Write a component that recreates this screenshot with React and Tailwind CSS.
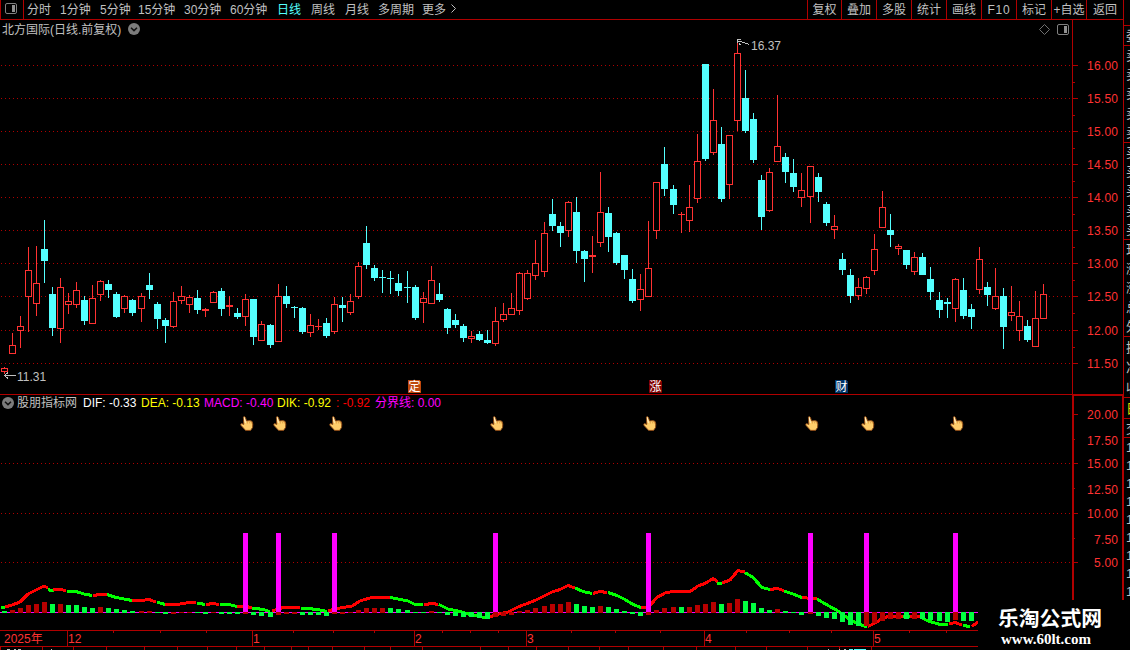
import React from "react";

const FONT = "font-['Liberation_Sans','Noto_Sans_CJK_SC',sans-serif]";

const PERIODS = [
  { label: "分时", width: "w-[33px]" },
  { label: "1分钟", width: "w-[40px]" },
  { label: "5分钟", width: "w-[38px]" },
  { label: "15分钟", width: "w-[46px]" },
  { label: "30分钟", width: "w-[46px]" },
  { label: "60分钟", width: "w-[47px]" },
  { label: "日线", width: "w-[34px]", active: true },
  { label: "周线", width: "w-[34px]" },
  { label: "月线", width: "w-[33px]" },
  { label: "多周期", width: "w-[44px]" },
  { label: "更多", width: "w-[27px]" },
];

const TOOLS = [
  { label: "复权", width: "w-[34px]" },
  { label: "叠加", width: "w-[35px]" },
  { label: "多股", width: "w-[35px]" },
  { label: "统计", width: "w-[35px]" },
  { label: "画线", width: "w-[35px]" },
  { label: "F10", width: "w-[35px]", spaced: true },
  { label: "标记", width: "w-[35px]" },
  { label: "+自选", width: "w-[35px]" },
  { label: "返回", width: "w-[37px]" },
];

// x, high, body top, body bottom, low, up
const CANDLES = [
  [4, 367, 368, 372, 374, 1], [12, 333, 345, 354, 354, 1], [20, 316, 326, 331, 348, 1],
  [28, 247, 270, 297, 332, 1], [36, 246, 283, 304, 316, 1], [44, 220, 249, 261, 283, 0],
  [52, 287, 294, 328, 336, 0], [60, 278, 287, 329, 343, 1], [68, 293, 301, 305, 314, 1],
  [76, 282, 290, 305, 308, 1], [84, 296, 300, 321, 325, 0], [92, 285, 298, 324, 324, 1],
  [100, 280, 281, 295, 301, 1], [108, 280, 284, 290, 298, 0], [116, 292, 294, 317, 318, 0],
  [124, 295, 296, 309, 313, 1], [132, 299, 300, 313, 316, 0], [141, 293, 296, 309, 322, 1],
  [149, 273, 285, 290, 299, 0], [157, 302, 304, 319, 329, 0], [165, 318, 320, 326, 343, 0],
  [173, 292, 301, 327, 328, 1], [181, 286, 296, 301, 304, 1], [189, 295, 297, 305, 313, 1],
  [197, 290, 298, 310, 314, 0], [205, 308, 309, 311, 317, 1], [213, 291, 292, 303, 303, 1],
  [221, 288, 291, 309, 316, 0], [229, 296, 305, 307, 316, 1], [237, 308, 313, 317, 319, 0],
  [245, 294, 299, 317, 326, 1], [253, 299, 299, 337, 345, 0], [261, 321, 324, 341, 341, 1],
  [270, 324, 325, 345, 348, 0], [278, 284, 296, 342, 342, 1], [286, 286, 296, 304, 308, 0],
  [294, 306, 307, 308, 318, 0], [302, 307, 308, 332, 334, 0], [310, 314, 325, 333, 337, 1],
  [318, 319, 326, 327, 330, 1], [326, 318, 323, 336, 338, 0], [334, 297, 304, 332, 334, 1],
  [342, 297, 305, 308, 322, 0], [350, 294, 301, 313, 315, 1], [358, 262, 266, 297, 299, 1],
  [366, 226, 243, 265, 269, 0], [374, 265, 268, 278, 281, 0], [382, 270, 277, 278, 293, 0],
  [390, 271, 278, 279, 294, 0], [398, 274, 283, 291, 296, 0], [407, 271, 287, 288, 303, 0],
  [415, 285, 287, 318, 320, 0], [423, 292, 298, 303, 323, 1], [431, 266, 280, 304, 304, 1],
  [439, 283, 294, 300, 302, 0], [447, 308, 309, 328, 334, 0], [455, 314, 320, 325, 328, 0],
  [463, 324, 326, 338, 342, 0], [471, 331, 336, 339, 343, 1], [479, 331, 334, 340, 341, 0],
  [487, 330, 340, 343, 344, 0], [495, 307, 321, 344, 346, 1], [503, 303, 314, 320, 322, 1],
  [511, 293, 308, 315, 315, 1], [519, 272, 273, 311, 315, 1], [527, 270, 273, 299, 300, 1],
  [535, 240, 263, 276, 280, 1], [544, 222, 233, 272, 277, 1], [552, 199, 214, 226, 231, 0],
  [560, 222, 226, 233, 247, 0], [568, 201, 202, 231, 237, 1], [576, 197, 212, 251, 263, 0],
  [584, 250, 251, 259, 282, 0], [592, 236, 255, 257, 273, 1], [600, 172, 212, 243, 247, 1],
  [608, 207, 213, 237, 252, 0], [616, 232, 233, 263, 265, 0], [624, 255, 255, 270, 279, 0],
  [632, 269, 279, 301, 303, 0], [640, 274, 289, 300, 311, 1], [648, 221, 268, 297, 297, 1],
  [656, 182, 182, 231, 239, 1], [664, 147, 164, 189, 196, 0], [673, 185, 189, 205, 214, 0],
  [681, 212, 214, 215, 233, 1], [689, 185, 207, 221, 232, 1], [697, 134, 161, 199, 203, 1],
  [705, 64, 64, 159, 161, 0], [713, 89, 120, 153, 155, 1], [721, 127, 144, 199, 202, 0],
  [729, 135, 135, 185, 199, 1], [737, 43, 53, 121, 131, 1], [745, 70, 98, 131, 133, 0],
  [753, 113, 119, 160, 163, 0], [761, 175, 180, 217, 230, 0], [769, 168, 172, 211, 212, 1],
  [777, 95, 146, 162, 162, 1], [785, 153, 157, 172, 183, 0], [793, 159, 173, 187, 192, 0],
  [801, 173, 190, 198, 207, 1], [810, 166, 166, 197, 223, 1], [818, 173, 177, 192, 202, 0],
  [826, 202, 204, 223, 226, 0], [834, 215, 226, 230, 239, 1], [842, 253, 259, 270, 275, 0],
  [850, 269, 275, 296, 303, 0], [858, 278, 287, 296, 300, 1], [866, 276, 277, 289, 294, 1],
  [874, 234, 249, 271, 275, 1], [882, 191, 207, 228, 228, 1], [890, 214, 230, 235, 247, 0],
  [898, 244, 246, 249, 255, 1], [906, 250, 250, 265, 269, 0], [914, 252, 257, 272, 275, 1],
  [922, 253, 257, 275, 275, 0], [930, 267, 279, 292, 300, 0], [939, 292, 300, 310, 318, 0],
  [947, 298, 302, 304, 318, 0], [955, 278, 279, 309, 322, 1], [963, 278, 290, 316, 319, 0],
  [971, 304, 309, 317, 329, 0], [979, 247, 259, 290, 294, 1], [987, 282, 287, 295, 306, 0],
  [995, 268, 296, 309, 310, 1], [1003, 288, 296, 327, 349, 0], [1011, 286, 312, 316, 321, 1],
  [1019, 301, 316, 331, 341, 1], [1027, 320, 326, 340, 342, 0], [1035, 291, 318, 347, 347, 1],
  [1043, 284, 294, 319, 319, 1],
];

// macd bars in candle order: colour letter and height, ten to a line
const MACD = `
  g2 r3 r5 r8 r9 r11 g9 r9 g8 g8
  g6 g5 r6 g5 g4 g3 g2 r2 r2 g1
  g-2 r-2 r1 r1 g1 g-2 r1 g-2 g-2 g-2
  r-2 g-3 g-4 g-5 r-3 r-2 r-2 g-3 g-3 g-3
  g-4 r-2 r-2 r1 r3 r5 r5 r5 g5 g4
  g3 g1 g1 r2 g1 g-3 g-4 g-5 g-5 g-6
  g-7 r-5 r-4 r-3 r2 r3 r5 r7 r9 r9
  r11 g9 g7 g6 r7 g6 g4 g2 g-2 g-4
  r-3 r3 r5 r6 g6 r6 r8 r9 r11 g9
  r10 r14 g12 g10 g5 g3 r4 g2 g1 g-3
  r-2 g-4 g-6 g-7 g-10 g-13 g-14 r-14 r-11 r-9
  r-7 r-7 g-7 r-7 g-7 g-8 g-9 g-10 r-8 g-9
  g-9
`
  .trim()
  .split(/\s+/)
  .map((bar) => ({ color: bar[0], value: Number(bar.slice(1)) }));

const DIF_LINE = [
  ["g", "1,607 5,607"],
  ["r", "5,607 12,605 20,602 28,594 36,590 44,586 48,588"],
  ["g", "48,589.5 51,590.5 54,590.5"],
  ["r", "53,590 60,589 66,591"],
  ["g", "67,591.5 76,591.5 84,594 92,595.5"],
  ["r", "93,595.5 100,594.5 107,594.5"],
  ["g", "107,594.5 116,597.5 124,599 132,600.5"],
  ["r", "132,600.5 141,600.5 149,599.5 156,602"],
  ["g", "157,602 165,604.5"],
  ["r", "165,604.5 177,604.5 189,602.5 196,603"],
  ["g", "197,603 205,604.5"],
  ["r", "206,604.5 213,603.5 219,604.5"],
  ["g", "220,604.5 229,604.5 237,606.5"],
  ["r", "237,606.5 245,606 252,608"],
  ["g", "252,608 263,609.5 270,611.5"],
  ["r", "272,611 283,607.5 300,607.5"],
  ["g", "301,608 318,609.5 327,611.5"],
  ["r", "328,611 337,608.5 352,606 360,601 370,598 380,597.5 390,597.5"],
  ["g", "390,597.5 398,599 408,601 414,604 423,604.5"],
  ["r", "424,604.5 433,603.5 438,604.5"],
  ["g", "439,604.5 448,609 458,611 470,614.5 478,616 486,618"],
  ["r", "487,618 497,614.5 508,612 518,607 535,600.5 552,592 560,589.5 568,585.5 575,588"],
  ["g", "575,588 583,591.5 592,593.5"],
  ["r", "593,593.5 600,591.5 607,592.5"],
  ["g", "608,592.5 617,595.5 625,599.5 633,604.5 641,607.5"],
  ["r", "641,607.5 648,607.5 657,597.5 665,593 673,591.5 690,591.5 698,586 705,583.5 713,578.5 718,582"],
  ["g", "717,583 722,583.5"],
  ["r", "722,583 730,580 738,570.5 745,572"],
  ["g", "745,572.5 753,577.5 762,587.5 770,589.5"],
  ["r", "770,589.5 777,588.5 784,590.5"],
  ["g", "784,591 793,594 802,597.5"],
  ["r", "802,597.5 817,599"],
  ["g", "817,599 828,605.5 839,611.5 847,617.5 855,622.5 867,627"],
  ["r", "868,626.5 875,623 882,618.5 888,616.5 903,616"],
  ["g", "903,616.5 910,616.5"],
  ["r", "910,616.5 920,616.5"],
  ["g", "920,617 928,621 940,624.5 948,624.5"],
  ["r", "949,624 955,622.5 962,625"],
  ["g", "963,625 970,627"],
  ["r", "972,626.5 978,622"],
];

const SIGNALS = [243, 276, 332, 493, 646, 808, 864, 953];

const PRICE_LEVELS = [
  ["16.00", 65], ["15.50", 98], ["15.00", 131], ["14.50", 164], ["14.00", 197],
  ["13.50", 230], ["13.00", 263], ["12.50", 296], ["12.00", 330], ["11.50", 363],
];

const MACD_LEVELS = [
  ["20.00", 414, true], ["17.50", 440, false], ["15.00", 463, true], ["12.50", 489, false],
  ["10.00", 513, true], ["7.50", 539, false], ["5.00", 562, true],
];

const EVENTS = [
  { label: "定", x: 408, color: "#bf480c" },
  { label: "涨", x: 649, color: "#800000" },
  { label: "财", x: 835, color: "#003468" },
];

const MONTHS = [["12", 67], ["1", 252], ["2", 414], ["3", 526], ["4", 704], ["5", 873]];
const MINOR_TICKS = [113, 160, 206, 293, 333, 374, 442, 470, 498, 571, 615, 660, 746, 789, 831, 909, 946];
const BOTTOM_TICKS = [
  0, 42, 73, 106, 144, 177, 207, 236, 264, 291, 308, 332, 364, 390, 422, 480, 508, 536, 568, 599,
  628, 663, 696, 735, 766, 807, 839, 871,
];

function PanelIcon({ className }) {
  return (
    <svg className={className} width="12" height="11" viewBox="0 0 12 11">
      <rect x="0.5" y="0.5" width="11" height="10" rx="1.5" fill="none" stroke="#808080" />
      <rect x="7" y="2" width="3" height="7" fill="#909090" />
    </svg>
  );
}

function ChevronDot() {
  return (
    <svg width="12" height="12" viewBox="0 0 12 12" className="shrink-0">
      <circle cx="6" cy="6" r="6" fill="#7c7c7c" />
      <path d="M3 4.8 L6 7.6 L9 4.8" fill="none" stroke="#111" strokeWidth="1.5" />
    </svg>
  );
}

function Toolbar() {
  return (
    <div className="flex h-5 shrink-0 border-b border-l border-[#b00000] text-[12px] leading-[18px] text-[#c0c0c0]">
      <div className="flex w-[23px] items-center border-r border-[#b00000] pl-1">
        <PanelIcon className="mb-0.5" />
      </div>
      <div className="flex flex-1 pl-[3px] pt-px">
        {PERIODS.map((item) => (
          <span
            key={item.label}
            className={`${item.width} shrink-0 whitespace-nowrap ${item.active ? "text-[#54ffff]" : ""}`}
          >
            {item.label}
          </span>
        ))}
        <svg width="8" height="18" viewBox="0 0 8 18">
          <path d="M2.5 3.5 L6.5 7.5 L2.5 11.5" fill="none" stroke="#c0c0c0" />
        </svg>
      </div>
      {TOOLS.map((tool) => (
        <span
          key={tool.label}
          className={`${tool.width} shrink-0 whitespace-nowrap border-l border-[#b00000] pt-px text-center ${
            tool.spaced ? "tracking-[0.8px]" : ""
          }`}
        >
          {tool.label}
        </span>
      ))}
    </div>
  );
}

function GridLine({ y }) {
  return <line x1="1" x2="1072" y1={y + 0.5} y2={y + 0.5} stroke="#b00000" strokeDasharray="1 3" />;
}

function Candle({ data }) {
  const [x, high, top, bottom, low, up] = data;
  const height = bottom - top;
  if (!up) {
    return (
      <g fill="#54ffff">
        <rect x={x} y={high} width="1" height={low - high} />
        <rect x={x - 3} y={top} width="7" height={height} />
      </g>
    );
  }
  return (
    <g fill="#ff3232">
      <rect x={x} y={high} width="1" height={top - high} />
      <rect x={x} y={bottom} width="1" height={low - bottom} />
      <rect x={x - 3} y={top} width="7" height={height} />
      {height > 2 && <rect x={x - 2} y={top + 1} width="5" height={height - 2} fill="#000" />}
    </g>
  );
}

function PricePanel() {
  return (
    <div className="flex h-[375px] shrink-0">
      <div className="flex w-[1072px] flex-col border-b border-[#b00000]">
        <div className="flex h-[18px] items-center pl-0.5 pr-[3px] text-[12px] leading-[18px] text-[#c0c0c0]">
          <span className="mr-[7px] whitespace-nowrap pt-px">北方国际(日线.前复权)</span>
          <ChevronDot />
          <svg className="ml-auto mr-[7px]" width="11" height="11" viewBox="0 0 11 11">
            <path d="M5.5 0.5 L10.5 5.5 L5.5 10.5 L0.5 5.5 Z" fill="none" stroke="#707070" />
          </svg>
          <PanelIcon />
        </div>
        <svg width="1072" height="356" viewBox="0 38 1072 356" shapeRendering="crispEdges">
          {PRICE_LEVELS.map(([label, y]) => (
            <GridLine key={label} y={y} />
          ))}
          {CANDLES.map((c) => (
            <Candle key={c[0]} data={c} />
          ))}
          <g stroke="#c0c0c0" fill="none">
            <path d="M738 41.5 H741 L749 44.5 M737.5 43 V39.5 H741 M739 43 L740.5 45" />
            <path d="M4 375.5 H16 M8 372.5 L4.5 375.5 L8 378.5" />
          </g>
          <g fill="#c0c0c0" fontSize="12">
            <text x="751" y="50">16.37</text>
            <text x="17" y="381">11.31</text>
          </g>
          {EVENTS.map((e) => (
            <g key={e.label}>
              <path d={`M${e.x} 380 h11 l2 2 v11 h-13 Z`} fill={e.color} />
              <text x={e.x + 6.5} y="391" fontSize="12" fill="#fff" textAnchor="middle">
                {e.label}
              </text>
            </g>
          ))}
        </svg>
      </div>
      <svg width="51" height="375" viewBox="1072 20 51 375" shapeRendering="crispEdges">
        <rect x="1072" y="20" width="1" height="375" fill="#b00000" />
        {PRICE_LEVELS.map(([label, y]) => (
          <g key={label}>
            <rect x="1073" y={y} width="5" height="1" fill="#b00000" />
            {y < 363 && <rect x="1073" y={y + 17} width="2" height="1" fill="#b00000" />}
            <text x="1118" y={y + 5} fontSize="12" fill="#ff3232" textAnchor="end" textLength="31">
              {label}
            </text>
          </g>
        ))}
        <rect x="1072" y="394" width="51" height="1" fill="#b00000" />
      </svg>
    </div>
  );
}

function Hand({ x }) {
  return (
    <g transform={`translate(${x} 416)`} shapeRendering="auto">
      <path
        d="M3.4 1 Q4.6 0 5.4 1.4 L6.6 5 L9.6 4.6 Q12.8 4.6 12.8 8 L12.6 11.4 L10.6 14.4 L5.6 14.4 L1 9.4 Q0.2 7.8 1.6 7.6 L3.8 8.4 Z"
        fill="#ffce6b"
        stroke="#8a4512"
        strokeWidth="0.9"
      />
      <path d="M4.2 1.6 L5.4 6.8" stroke="#fff3cf" strokeWidth="1" />
      <path d="M7.4 5.4 V7.6 M9.6 5.2 V7.4 M11.4 5.6 V7.6" stroke="#d08a35" strokeWidth="0.6" />
    </g>
  );
}

function IndicatorPanel() {
  return (
    <div className="flex h-[235px] shrink-0">
      <div className="flex w-[1072px] flex-col">
        <div className="flex h-4 items-center gap-1.5 whitespace-pre pl-0.5 text-[12px] leading-4">
          <ChevronDot />
          <span className="-ml-[3px] text-[#c0c0c0]">股朋指标网</span>
          <span className="w-[52px] text-white">DIF: -0.33</span>
          <span className="w-[57px] text-[#ffff00]">DEA: -0.13</span>
          <span className="w-[67px] text-[#ff00ff]">MACD: -0.40</span>
          <span className="w-[53px] text-[#ffff00]">DIK: -0.92</span>
          <span className="w-[33px] text-[#ff0000]">: -0.92</span>
          <span className="text-[#ff00ff]">分界线: 0.00</span>
        </div>
        <svg width="1072" height="219" viewBox="0 411 1072 219" shapeRendering="crispEdges">
          {[463, 513, 562].map((y) => (
            <GridLine key={y} y={y} />
          ))}
          <rect x="0" y="612" width="978" height="1" fill="#ff00ff" />
          {DIF_LINE.map(([color, points]) => (
            <polyline
              key={points}
              points={points}
              fill="none"
              stroke={color === "r" ? "#ff0000" : "#00ff00"}
              strokeWidth="3"
            />
          ))}
          {SIGNALS.map((x) => (
            <rect key={x} x={x} y="533" width="5" height="79" fill="#ff00ff" />
          ))}
          {MACD.map(({ color, value }, i) => (
            <rect
              key={i}
              x={CANDLES[i][0] - 2}
              y={value > 0 ? 613 - value : 612}
              width="5"
              height={Math.abs(value)}
              fill={color === "r" ? "#b80000" : "#00ff40"}
            />
          ))}
          {SIGNALS.map((x) => (
            <Hand key={x} x={x - 3} />
          ))}
        </svg>
      </div>
      <svg width="51" height="235" viewBox="1072 395 51 235" shapeRendering="crispEdges">
        <path d="M1072 395 H1123 V396 H1074 V600 H1072 Z" fill="#b00000" />
        <rect x="1122" y="395" width="1" height="205" fill="#b00000" />
        {MACD_LEVELS.map(([label, y, major]) => (
          <g key={label}>
            <rect x="1074" y={major ? y : y - 1} width={major ? 4 : 1} height="1" fill="#b00000" />
            <text
              x="1118"
              y={y + 5}
              fontSize="12"
              fill="#ff3232"
              textAnchor="end"
              textLength={label.length > 4 ? 31 : 24}
            >
              {label}
            </text>
          </g>
        ))}
      </svg>
    </div>
  );
}

function TimeAxis() {
  return (
    <svg width="978" height="20" viewBox="0 630 978 20" className="shrink-0" shapeRendering="crispEdges">
      <g fill="#b00000">
        <rect x="0" y="630" width="978" height="1" />
        <rect x="0" y="646" width="978" height="1" />
        {MONTHS.map(([, x]) => (
          <rect key={x} x={x} y="631" width="1" height="15" />
        ))}
        {MINOR_TICKS.map((x) => (
          <rect key={x} x={x} y="631" width="1" height="2" />
        ))}
        {BOTTOM_TICKS.map((x) => (
          <rect key={x} x={x} y="647" width="1" height="3" />
        ))}
      </g>
      <g fill="#ff3232" fontSize="12">
        <text x="4" y="643">2025年</text>
        {MONTHS.map(([label, x]) => (
          <text key={x} x={x + 1} y="643">
            {label}
          </text>
        ))}
      </g>
      <path d="M7 649.5 h3 m4 0 h2 m2 0 h3 m30 0 h1 M828 649.5 h1 m10 0 h1 m4 0 h2" stroke="#c0c0c0" />
      <path d="M849 649.5 h4 m1 0 h12" stroke="#54ffff" />
    </svg>
  );
}

// quote column, only its first pixels are inside the window
const QUOTE_GROUPS = [
  { rows: ["委"], height: "h-[20px]" },
  { rows: ["卖", "卖", "卖", "卖", "卖"], height: "h-[97px]" },
  { rows: ["买", "买", "买", "买", "买"], height: "h-[97px]" },
  { rows: ["现", "涨", "涨", "总", "外"], height: "h-[97px]" },
  { rows: ["换", "净", "收"], height: "h-[61px]" },
  { rows: ["日"], height: "h-[21px]", color: "text-[#e0e000]" },
  { rows: ["交"], height: "h-[19px]" },
];

function QuoteStrip() {
  return (
    <div className="flex h-[650px] w-[7px] shrink-0 flex-col overflow-hidden text-[13px] leading-none text-[#c0c0c0]">
      <div className="h-[26px] shrink-0 border-b border-l border-[#b00000]" />
      {QUOTE_GROUPS.map((group, i) => (
        <div
          key={i}
          className={`${group.height} ${group.color || ""} flex shrink-0 flex-col justify-around overflow-hidden border-b border-l border-[#b00000] pl-0.5`}
        >
          {group.rows.map((row, j) => (
            <span key={j} className="w-4">
              {row}
            </span>
          ))}
        </div>
      ))}
      <div className="flex h-[162px] shrink-0 flex-col border-l border-[#b00000] pl-0.5">
        {[0, 1, 2, 3, 4, 5, 6, 7, 8].map((n) => (
          <span key={n} className="h-[18px] w-4 pt-[3px]">
            1
          </span>
        ))}
      </div>
    </div>
  );
}

export default function App() {
  return (
    <div className={`relative flex h-[650px] w-[1130px] overflow-hidden bg-black ${FONT}`}>
      <div className="flex w-[1123px] shrink-0 flex-col">
        <Toolbar />
        <PricePanel />
        <IndicatorPanel />
        <TimeAxis />
      </div>
      <QuoteStrip />
      <div className="absolute bottom-0 right-0 flex h-[50px] w-[152px] flex-col bg-black pl-5 text-white">
        <span className="mt-[7px] whitespace-nowrap text-[20.8px] font-bold leading-6">乐淘公式网</span>
        <span className="pl-[3px] font-['Liberation_Serif',serif] text-[15px] font-bold leading-4">
          www.60lt.com
        </span>
      </div>
    </div>
  );
}
